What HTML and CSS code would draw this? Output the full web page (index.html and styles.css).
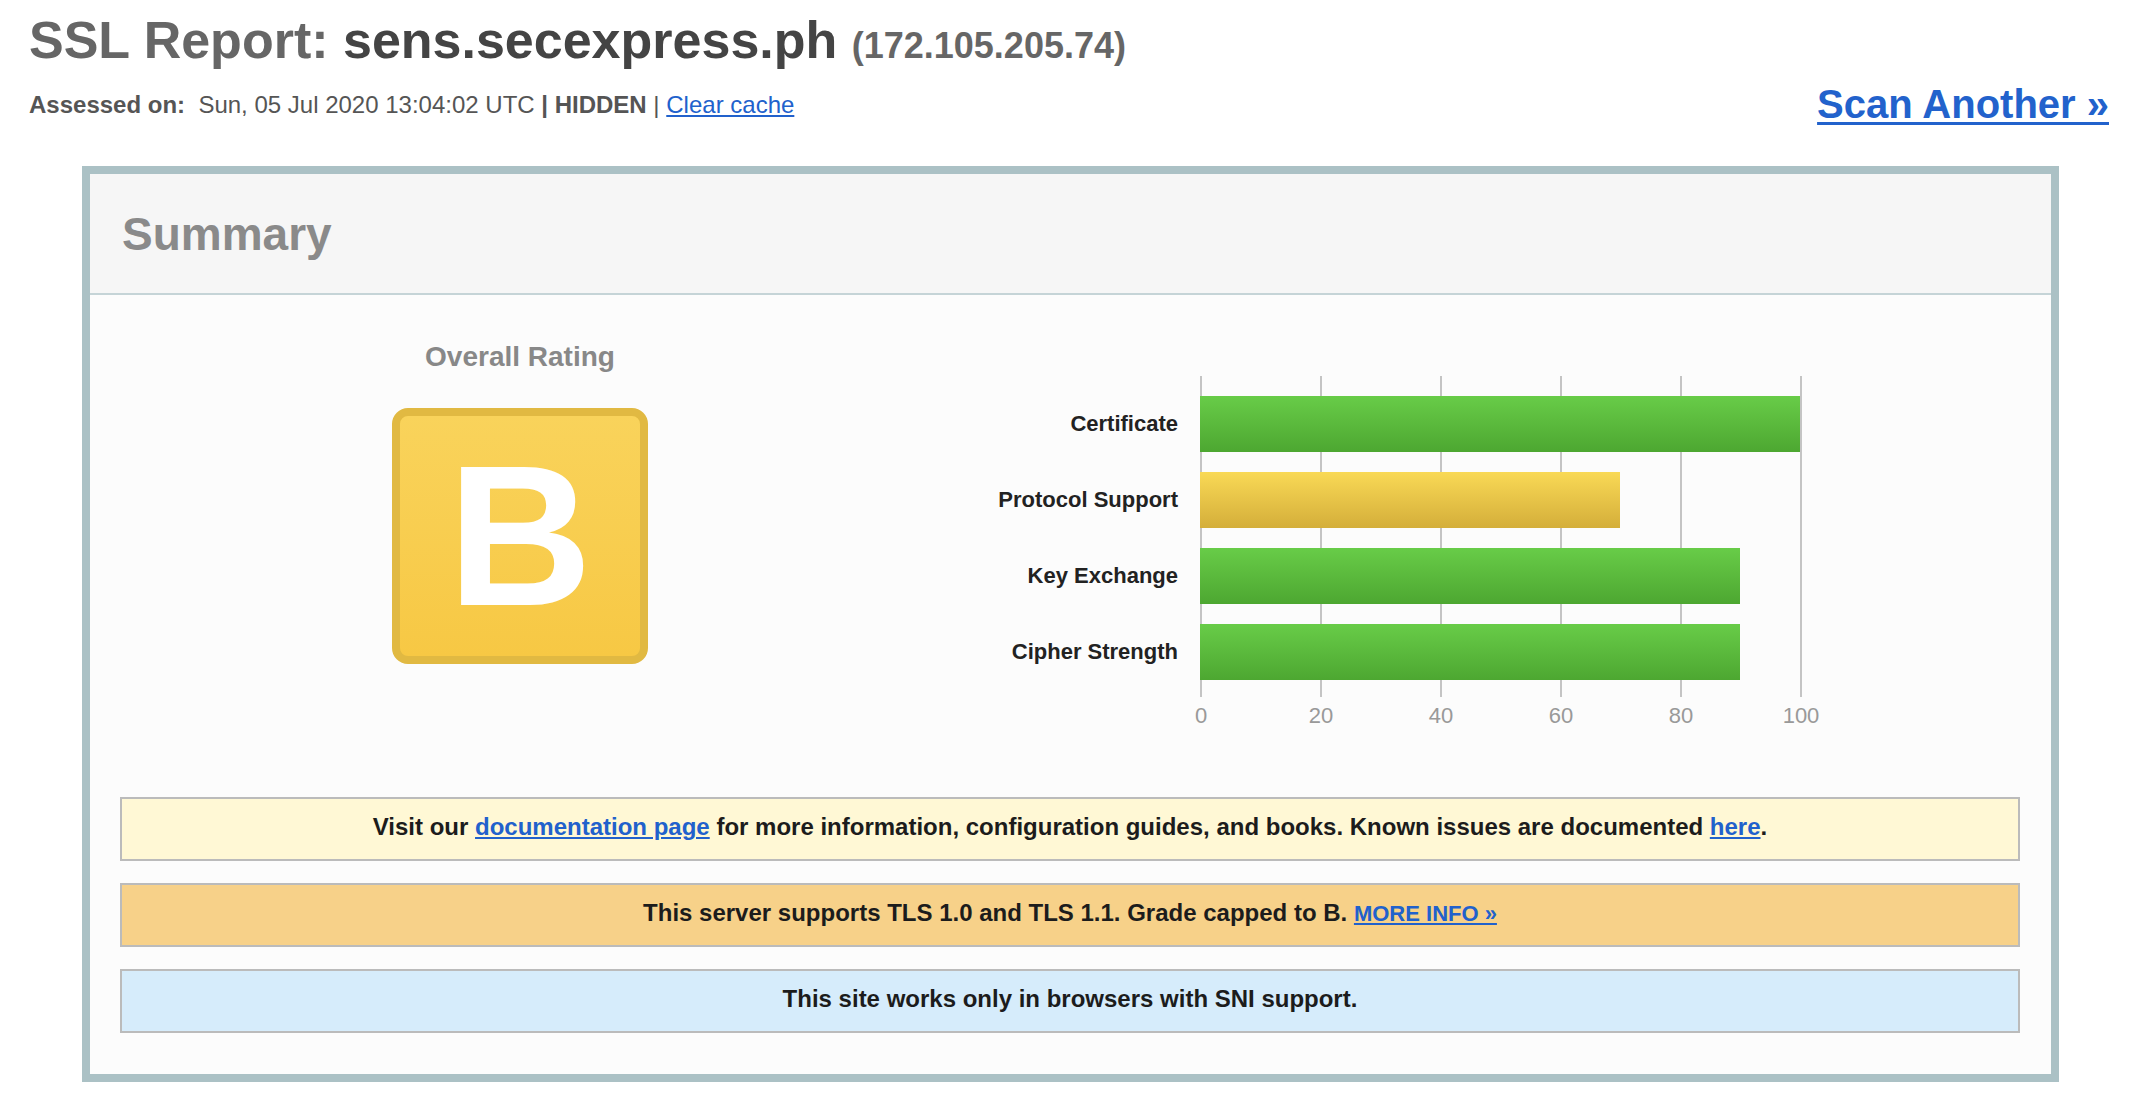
FILE: index.html
```html
<!DOCTYPE html>
<html lang="en">
<head>
<meta charset="utf-8">
<title>SSL Report: sens.secexpress.ph</title>
<link rel="stylesheet" href="styles.css">
</head>
<body>
<div class="page">
  <header class="top">
    <div class="titles">
      <h1 class="report-title"><span class="t-label">SSL Report:</span> <span class="t-host">sens.secexpress.ph </span><span class="t-ip">(172.105.205.74)</span></h1>
      <div class="assessed"><b>Assessed on:</b>&nbsp; Sun, 05 Jul 2020 13:04:02 UTC <b>| HIDDEN</b> | <a href="#">Clear cache</a></div>
    </div>
    <a class="scan" href="#">Scan Another &raquo;</a>
  </header>

  <section class="report">
    <div class="report-head"><h2>Summary</h2></div>
    <div class="report-body">
      <div class="overview">
        <div class="rating">
          <div class="rating-title">Overall Rating</div>
          <div class="grade"><span>B</span></div>
        </div>
        <div class="chart">
          <div class="chart-labels">
            <div class="chart-label">Certificate</div>
            <div class="chart-label">Protocol Support</div>
            <div class="chart-label">Key Exchange</div>
            <div class="chart-label">Cipher Strength</div>
          </div>
          <div class="chart-main">
            <div class="plot">
              <div class="bar bar-green" style="width:100%"></div>
              <div class="bar bar-yellow" style="width:70%"></div>
              <div class="bar bar-green" style="width:90%"></div>
              <div class="bar bar-green" style="width:90%"></div>
            </div>
            <div class="axis">
              <span>0</span><span>20</span><span>40</span><span>60</span><span>80</span><span>100</span>
            </div>
          </div>
        </div>
      </div>

      <div class="notes">
        <div class="note note-info">Visit our <a href="#">documentation page</a> for more information, configuration guides, and books. Known issues are documented <a href="#">here</a>.</div>
        <div class="note note-warn">This server supports TLS 1.0 and TLS 1.1. Grade capped to B. <a class="more" href="#">MORE INFO &raquo;</a></div>
        <div class="note note-sni">This site works only in browsers with SNI support.</div>
      </div>
    </div>
  </section>
</div>
</body>
</html>
```

FILE: styles.css
```css
html, body {
  margin: 0;
  padding: 0;
  background: #ffffff;
}

body {
  font-family: "Liberation Sans", Arial, Helvetica, sans-serif;
  color: #333;
}

a {
  color: #2161cc;
}

.page {
  width: 2152px;
}

/* ---------- top header ---------- */
.top {
  display: flex;
  justify-content: space-between;
  align-items: flex-start;
  padding: 0 43px 0 29px;
}

.titles {
  padding-top: 10px;
}

.report-title {
  margin: 0;
  font-size: 52px;
  line-height: 60px;
  font-weight: bold;
  white-space: nowrap;
}

.t-label {
  color: #666666;
}

.t-host {
  color: #444444;
}

.t-ip {
  color: #666666;
  font-size: 36px;
}

.assessed {
  margin-top: 14px;
  font-size: 24px;
  line-height: 30px;
  color: #555555;
  white-space: nowrap;
}

.assessed b {
  color: #555555;
}

.scan {
  margin-top: 80px;
  font-size: 40px;
  line-height: 48px;
  font-weight: bold;
  color: #2262cc;
  text-decoration-thickness: 3px;
  text-underline-offset: 4px;
  white-space: nowrap;
}

/* ---------- report box ---------- */
.report {
  margin: 38px 0 0 82px;
  width: 1977px;
  box-sizing: border-box;
  border: 8px solid #abc1c5;
  background: #fcfcfc;
}

.report-head {
  background: #f6f6f6;
  padding: 33px 32px 32px;
  border-bottom: 2px solid #c5d4d7;
}

.report-head h2 {
  margin: 0;
  font-size: 46px;
  line-height: 54px;
  font-weight: bold;
  color: #8a8a8a;
}

.report-body {
  padding: 0 31px 41px 30px;
}

.overview {
  display: flex;
  align-items: flex-start;
}

/* rating */
.rating {
  width: 800px;
  padding-top: 46px;
  display: flex;
  flex-direction: column;
  align-items: center;
}

.rating-title {
  font-size: 28px;
  line-height: 32px;
  font-weight: bold;
  color: #888888;
}

.grade {
  margin-top: 35px;
  width: 256px;
  height: 256px;
  box-sizing: border-box;
  border: 8px solid #e1b942;
  border-radius: 16px;
  background: linear-gradient(to bottom, #f9d35b, #f7c844);
  display: flex;
  align-items: center;
  justify-content: center;
  color: #ffffff;
  font-size: 200px;
  line-height: 1;
  font-weight: bold;
}

/* chart */
.chart {
  margin-top: 81px;
  margin-left: 1px;
  display: flex;
  align-items: flex-start;
}

.chart-labels {
  width: 257px;
  margin-right: 22px;
  padding-top: 20px;
  display: flex;
  flex-direction: column;
  gap: 20px;
}

.chart-label {
  height: 56px;
  display: flex;
  align-items: center;
  justify-content: flex-end;
  font-size: 22px;
  font-weight: bold;
  color: #222222;
  white-space: nowrap;
}

.plot {
  width: 602px;
  height: 321px;
  padding: 20px 0 17px 0;
  box-sizing: border-box;
  border-right: 2px solid #c4c4c4;
  background: repeating-linear-gradient(to right, #c4c4c4 0, #c4c4c4 2px, transparent 2px, transparent 120px);
  display: flex;
  flex-direction: column;
  gap: 20px;
}

.bar {
  height: 56px;
  flex: none;
}

.bar-green {
  background: linear-gradient(to bottom, #68cc48, #4da731);
}

.bar-yellow {
  background: linear-gradient(to bottom, #f9d956, #d4ae3a);
}

.axis {
  display: flex;
  margin: 7px 0 0 -59px;
}

.axis span {
  width: 120px;
  text-align: center;
  font-size: 22px;
  line-height: 24px;
  color: #999999;
}

/* notes */
.notes {
  margin-top: 69px;
  display: flex;
  flex-direction: column;
  gap: 22px;
}

.note {
  height: 64px;
  box-sizing: border-box;
  border: 2px solid #bbbbbb;
  padding-bottom: 4px;
  text-align: center;
  font-size: 24px;
  line-height: 56px;
  font-weight: bold;
  color: #1c1c1c;
  white-space: nowrap;
}

.note-info {
  background: #fff8d5;
}

.note-warn {
  background: #f7d189;
}

.note-sni {
  background: #d6ecfb;
}

.more {
  font-size: 22px;
}
```
